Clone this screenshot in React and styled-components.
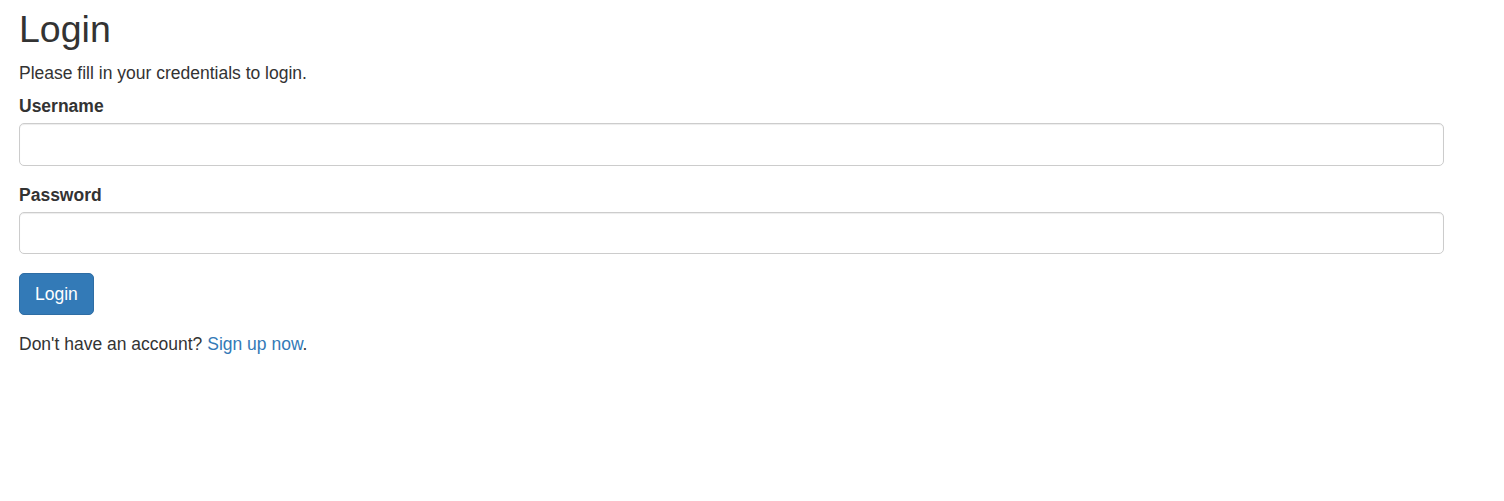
import styled, { createGlobalStyle } from "styled-components";

const GlobalStyle = createGlobalStyle`
  body {
    margin: 0;
    background: #fff;
    font-family: "Liberation Sans", Arial, Helvetica, sans-serif;
    font-size: 17.5px;
    color: #333;
  }
  * { box-sizing: border-box; }
`;

const Wrapper = styled.div`
  width: 1425px;
  margin-left: 19px;
`;

const Title = styled.h2`
  font-size: 37.5px;
  font-weight: 500;
  line-height: 41px;
  margin: 9px 0 10.5px;
  color: #333;
`;

const Lead = styled.p`
  margin: 0 0 10.7px;
  line-height: 25px;
`;

const FormGroup = styled.div`
  margin-bottom: ${(p) => p.gap || "19px"};
`;

const Label = styled.label`
  display: block;
  font-weight: 700;
  line-height: 20px;
  margin-bottom: 7px;
`;

const Input = styled.input`
  display: block;
  width: 100%;
  height: 42.5px;
  padding: 7.5px 15px;
  font: inherit;
  color: #555;
  background: #fff;
  border: 1px solid #ccc;
  border-radius: 5px;
  box-shadow: inset 0 1px 1px rgba(0, 0, 0, 0.075);
  outline: none;
`;

const Button = styled.button`
  display: inline-block;
  height: 42px;
  padding: 0 15px;
  font: inherit;
  line-height: 40px;
  color: #fff;
  background: #337ab7;
  border: 1px solid #2e6da4;
  border-radius: 5px;
  cursor: pointer;
`;

const Footer = styled.p`
  margin: 0;
  line-height: 25px;

  a {
    color: #337ab7;
    text-decoration: none;
  }
`;

export default function App() {
  return (
    <>
      <GlobalStyle />
      <Wrapper>
        <Title>Login</Title>
        <Lead>Please fill in your credentials to login.</Lead>
        <form onSubmit={(e) => e.preventDefault()}>
          <FormGroup>
            <Label>Username</Label>
            <Input type="text" name="username" />
          </FormGroup>
          <FormGroup>
            <Label>Password</Label>
            <Input type="password" name="password" />
          </FormGroup>
          <FormGroup gap="16.5px">
            <Button type="submit">Login</Button>
          </FormGroup>
          <Footer>
            Don't have an account? <a href="#">Sign up now</a>.
          </Footer>
        </form>
      </Wrapper>
    </>
  );
}
